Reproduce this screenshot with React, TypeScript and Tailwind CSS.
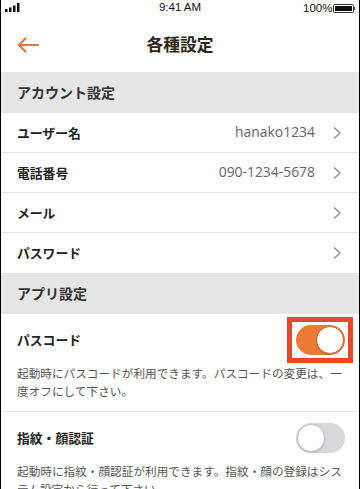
import React from "react";

const jp = { fontFamily: '"Noto Sans CJK JP", "Noto Sans", sans-serif' };

function Chevron() {
  return (
    <svg width="8" height="14" viewBox="0 0 8 14" className="ml-[18px] shrink-0">
      <polyline points="1,1.5 7,7 1,12.5" fill="none" stroke="#8a8a8a" strokeWidth="1.2" />
    </svg>
  );
}

function Row({ label, value, last }: { label: string; value?: string; last?: boolean }) {
  return (
    <div
      className={`flex h-[40px] items-center pl-[16px] pr-[18px] ${last ? "" : "border-b border-[#e6e6e6]"}`}
    >
      <span className="text-[12.8px] font-bold text-[#222]" style={jp}>
        {label}
      </span>
      <span
        className="ml-auto text-[13.9px] text-[#666]"
        style={{ fontFamily: '"Open Sans", sans-serif' }}
      >
        {value}
      </span>
      <Chevron />
    </div>
  );
}

function Section({ title }: { title: string }) {
  return (
    <div className="flex h-[41px] items-center bg-[#e6e6e6] pl-[16px]">
      <span className="text-[14px] font-bold text-[#333]" style={jp}>
        {title}
      </span>
    </div>
  );
}

function Toggle({ on }: { on: boolean }) {
  return (
    <div
      className={`relative h-[30px] w-[49px] rounded-full ${on ? "bg-[#ec7a34]" : "bg-[#d8d8da]"}`}
    >
      <div
        className={`absolute top-[1px] h-[28px] w-[28px] rounded-full bg-white ${
          on ? "right-[1px] border border-[#c8692e]" : "left-[1px] border border-[#c4c4c4]"
        } shadow-[0_1px_2px_rgba(0,0,0,0.15)]`}
      />
    </div>
  );
}

function ToggleBlock({
  label,
  desc,
  on,
  highlight,
  divider,
}: {
  label: string;
  desc: string;
  on: boolean;
  highlight?: boolean;
  divider?: boolean;
}) {
  return (
    <div className={`pt-[10px] pb-[12px] ${divider ? "border-b border-[#e6e6e6]" : ""}`}>
      <div className="flex h-[32px] items-center pl-[16px] pr-[14px]">
        <span className="text-[12.8px] font-bold text-[#222]" style={jp}>
          {label}
        </span>
        <div className="relative ml-auto">
          <Toggle on={on} />
          {highlight && (
            <div className="absolute -left-[9px] -right-[8px] -top-[8px] -bottom-[8px] border-[5px] border-[#e5482b]" />
          )}
        </div>
      </div>
      <p
        className="mt-[8px] px-[16px] text-[11.65px] leading-[17.5px] text-[#555]"
        style={jp}
      >
        {desc}
      </p>
    </div>
  );
}

export default function App() {
  return (
    <div className="relative h-[489px] w-[360px] overflow-hidden border-x border-black bg-white">
      {/* status bar */}
      <div className="relative flex h-[15px] items-center">
        <svg width="16" height="9" viewBox="0 0 16 9" className="absolute left-[4px] top-[3px]">
          <rect x="0" y="6" width="2.5" height="3" fill="#111" />
          <rect x="4" y="4.5" width="2.5" height="4.5" fill="#111" />
          <rect x="8" y="2.5" width="2.5" height="6.5" fill="#111" />
          <rect x="12" y="0" width="2.5" height="9" fill="#111" />
        </svg>
        <span
          className="absolute left-0 right-0 top-[0px] text-center text-[11.5px] leading-[15px] text-[#111]"
          style={{ fontFamily: '"Liberation Sans", Arial, sans-serif' }}
        >
          9:41 AM
        </span>
        <div className="absolute right-[4px] top-[2px] flex items-center">
          <span
            className="text-[11.5px] leading-[12px] text-[#111]"
            style={{ fontFamily: '"Liberation Sans", Arial, sans-serif' }}
          >
            100%
          </span>
          <div className="h-[9px] w-[21px] rounded-[1.5px] border border-[#333] p-[1px]">
            <div className="h-full w-full bg-[#111]" />
          </div>
          <div className="h-[3px] w-[1.5px] bg-[#555]" />
        </div>
      </div>

      {/* header */}
      <div className="relative flex h-[57px] items-center justify-center">
        <svg
          width="22"
          height="16"
          viewBox="0 0 22 16"
          className="absolute left-[16px] top-[22px]"
        >
          <line x1="2" y1="8" x2="21.5" y2="8" stroke="#e07a3c" strokeWidth="2.2" strokeLinecap="round" />
          <polyline
            points="8.5,1.5 1.8,8 8.5,14.5"
            fill="none"
            stroke="#e07a3c"
            strokeWidth="2.2"
            strokeLinecap="round"
            strokeLinejoin="round"
          />
        </svg>
        <span className="mt-[2px] text-[16.8px] font-bold text-[#2e241a]" style={jp}>
          各種設定
        </span>
      </div>

      <Section title="アカウント設定" />
      <Row label="ユーザー名" value="hanako1234" />
      <Row label="電話番号" value="090-1234-5678" />
      <Row label="メール" />
      <Row label="パスワード" last />

      <Section title="アプリ設定" />
      <ToggleBlock
        label="パスコード"
        desc="起動時にパスコードが利用できます。パスコードの変更は、一度オフにして下さい。"
        on
        highlight
        divider
      />
      <ToggleBlock
        label="指紋・顔認証"
        desc="起動時に指紋・顔認証が利用できます。指紋・顔の登録はシステム設定から行って下さい。"
        on={false}
      />
    </div>
  );
}
